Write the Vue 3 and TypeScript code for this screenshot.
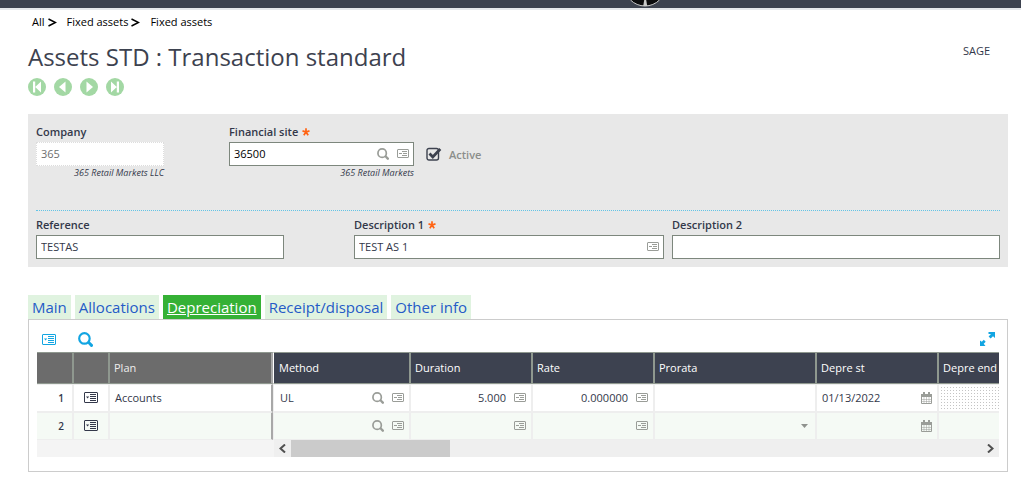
<script setup lang="ts">
import { ref } from 'vue'

interface Line {
  id: number
  plan: string
  method: string
  duration: string
  rate: string
  prorata: string
  start: string
  endLocked: boolean
}

const tabs = ['Main', 'Allocations', 'Depreciation', 'Receipt/disposal', 'Other info']
const activeTab = ref('Depreciation')

const company = ref('365')
const site = ref('36500')
const active = ref(true)
const reference = ref('TESTAS')
const description1 = ref('TEST AS 1')
const description2 = ref('')

const navButtons = [
  { label: 'First record', path: 'M5 3.500h2.200v11H5zM13 3.500v11L7.200 9z' },
  { label: 'Previous record', path: 'M11.500 3.500v11L5 9z' },
  { label: 'Next record', path: 'M6.500 3.500v11L13 9z' },
  { label: 'Last record', path: 'M10.800 3.500H13v11h-2.200zM5 3.500v11L10.800 9z' },
]

const lines = ref<Line[]>([
  { id: 1, plan: 'Accounts', method: 'UL', duration: '5.000', rate: '0.000000', prorata: '', start: '01/13/2022', endLocked: true },
  { id: 2, plan: '', method: '', duration: '', rate: '', prorata: '', start: '', endLocked: false },
])
</script>

<template>
  <svg class="symbols" aria-hidden="true">
    <symbol id="i-search" viewBox="0 0 14 14">
      <circle cx="6" cy="6" r="4.900" fill="none" stroke="currentColor" stroke-width="2" />
      <path d="M8.500 10l1.700-1.800 3.400 3.300a1.300 1.300 0 0 1-2 2z" fill="currentColor" />
    </symbol>
    <symbol id="i-card" viewBox="0 0 14 11">
      <rect x="0.500" y="0.500" width="13" height="10" rx="0.500" fill="none" stroke="currentColor" />
      <path d="M2 4.500h3.200L3.600 6.500zM6 2h6v1H6zM6 4h6v1H6zM6 6h6v1H6zM6 8h6v1H6z" fill="currentColor" />
    </symbol>
    <symbol id="i-card-small" viewBox="0 0 12 9">
      <rect x="0.500" y="0.500" width="11" height="8" rx="0.500" fill="none" stroke="currentColor" />
      <path d="M2 4h3v1H2zM5 2h5v1H5zM6 4h4v1H6zM5 6h5v1H5z" fill="currentColor" />
    </symbol>
    <symbol id="i-calendar" viewBox="0 0 11 12">
      <path d="M0 2h11v3H0zM2 0h2v2H2zM7 0h2v2H7z" fill="currentColor" />
      <path d="M.5 5v6.500h10V5" fill="none" stroke="currentColor" />
      <path d="M3 5v6M5.500 5v6M8 5v6M1 7.500h9M1 9.500h9" fill="none" stroke="currentColor" stroke-width="0.500" />
    </symbol>
    <symbol id="i-star" viewBox="0 0 8 8">
      <path d="M4 4V.3M4 4L.5 2.900M4 4l3.500-1.100M4 4L1.800 7.200M4 4l2.200 3.200" fill="none" stroke="#ff6414" stroke-width="1.700" />
    </symbol>
  </svg>

  <header class="topbar">
    <svg class="avatar" width="30" height="7" viewBox="0 0 30 7" aria-hidden="true">
      <circle cx="15" cy="-14.500" r="20.500" fill="#0b0b0d" stroke="#c8c8c8" />
      <path d="M14.200 0h2l1 6h-4z" fill="#c9c9c9" />
    </svg>
  </header>

  <main class="page">
    <nav class="crumbs" aria-label="Breadcrumb">
      <template v-for="(crumb, i) in ['All', 'Fixed assets', 'Fixed assets']" :key="i">
        <a href="#">{{ crumb }}</a>
        <svg v-if="i < 2" width="9" height="9" viewBox="0 0 9 9" aria-hidden="true">
          <path d="M.5 1l7 3.500-7 3.500" fill="none" stroke="#000" stroke-width="1.500" />
        </svg>
      </template>
    </nav>

    <div class="heading">
      <h1>Assets STD : Transaction standard</h1>
      <span class="folder">SAGE</span>
    </div>

    <div class="recordnav">
      <button v-for="b in navButtons" :key="b.label" type="button" :aria-label="b.label">
        <svg width="18" height="18" viewBox="0 0 18 18">
          <circle cx="9" cy="9" r="9" fill="#a3d8a4" />
          <path :d="b.path" fill="#fff" />
        </svg>
      </button>
    </div>

    <section class="panel">
      <div class="row first">
        <div class="field company">
          <label for="company">Company</label>
          <div class="box readonly"><input id="company" v-model="company" readonly /></div>
          <em>365 Retail Markets LLC</em>
        </div>
        <div class="field site">
          <label for="site">Financial site <svg class="star"><use href="#i-star" /></svg></label>
          <div class="box strong">
            <input id="site" v-model="site" />
            <button type="button" aria-label="Search site"><svg class="search"><use href="#i-search" /></svg></button>
            <button type="button" aria-label="Site actions"><svg class="card"><use href="#i-card-small" /></svg></button>
          </div>
          <em>365 Retail Markets</em>
        </div>
        <label class="check">
          <input v-model="active" type="checkbox" />
          <svg width="16" height="14" viewBox="0 0 16 14" aria-hidden="true">
            <rect x="1" y="1.500" width="11.500" height="11.500" rx="2" fill="none" stroke="#3d424f" stroke-width="1.400" />
            <path v-if="active" d="M3.500 6.500l3.300 3.500 7.500-8" fill="none" stroke="#3d424f" stroke-width="2.800" />
          </svg>
          <span>Active</span>
        </label>
      </div>
      <div class="row second">
        <div class="field reference">
          <label for="reference">Reference</label>
          <div class="box"><input id="reference" v-model="reference" /></div>
        </div>
        <div class="field desc1">
          <label for="desc1">Description 1 <svg class="star"><use href="#i-star" /></svg></label>
          <div class="box">
            <input id="desc1" v-model="description1" />
            <button type="button" aria-label="Description actions"><svg class="card"><use href="#i-card-small" /></svg></button>
          </div>
        </div>
        <div class="field desc2">
          <label for="desc2">Description 2</label>
          <div class="box"><input id="desc2" v-model="description2" /></div>
        </div>
      </div>
    </section>

    <div class="tabs" role="tablist">
      <button
        v-for="t in tabs"
        :key="t"
        type="button"
        role="tab"
        :aria-selected="t === activeTab"
        :class="{ on: t === activeTab }"
        @click="activeTab = t"
      >{{ t }}</button>
    </div>

    <section class="content">
      <div class="tools">
        <button type="button" aria-label="Table actions"><svg width="14" height="11"><use href="#i-card" /></svg></button>
        <button type="button" aria-label="Search"><svg width="15" height="15"><use href="#i-search" /></svg></button>
        <button class="expand" type="button" aria-label="Full screen">
          <svg width="16" height="14" viewBox="0 0 16 14">
            <path d="M9.500 0H16v6l-2-1.800-2.400 2.300-2-2L12 2H9.500zM6.500 14H1V8.500l1.800 1.300 2-2 1.900 2-2 2L6.500 14z" fill="#12a5e2" />
          </svg>
        </button>
      </div>

      <table>
        <colgroup>
          <col class="w-num" /><col class="w-act" /><col class="w-plan" /><col class="w-method" />
          <col class="w-mid" /><col class="w-mid" /><col class="w-prorata" /><col class="w-mid" /><col />
        </colgroup>
        <thead>
          <tr>
            <th class="fixed"></th>
            <th class="fixed"></th>
            <th class="fixed plan">Plan</th>
            <th class="method">Method</th>
            <th>Duration</th>
            <th>Rate</th>
            <th>Prorata</th>
            <th>Depre st</th>
            <th class="last">Depre end</th>
          </tr>
        </thead>
        <tbody>
          <tr v-for="line in lines" :key="line.id">
            <td class="num">{{ line.id }}</td>
            <td class="act"><button type="button" aria-label="Line actions"><svg width="14" height="11"><use href="#i-card" /></svg></button></td>
            <td class="plan">{{ line.plan }}</td>
            <td class="method">
              <div class="cell">
                <input v-model="line.method" aria-label="Method" />
                <button type="button" aria-label="Search method"><svg class="search"><use href="#i-search" /></svg></button>
                <button type="button" aria-label="Method actions"><svg class="card"><use href="#i-card-small" /></svg></button>
              </div>
            </td>
            <td>
              <div class="cell amount">
                <input v-model="line.duration" aria-label="Duration" />
                <button type="button" aria-label="Duration actions"><svg class="card"><use href="#i-card-small" /></svg></button>
              </div>
            </td>
            <td>
              <div class="cell amount">
                <input v-model="line.rate" aria-label="Rate" />
                <button type="button" aria-label="Rate actions"><svg class="card"><use href="#i-card-small" /></svg></button>
              </div>
            </td>
            <td>
              <div class="cell">
                <select v-model="line.prorata" aria-label="Prorata"><option value=""></option></select>
                <svg v-if="line.id === 2" class="arrow" width="7" height="4" viewBox="0 0 7 4"><path d="M0 0h7L3.500 4z" fill="currentColor" /></svg>
              </div>
            </td>
            <td>
              <div class="cell">
                <input v-model="line.start" aria-label="Depreciation start" />
                <button type="button" aria-label="Open calendar"><svg width="11" height="12"><use href="#i-calendar" /></svg></button>
              </div>
            </td>
            <td class="last" :class="{ locked: line.endLocked }"></td>
          </tr>
        </tbody>
      </table>

      <div class="scroll">
        <div class="still"></div>
        <button type="button" aria-label="Scroll left">
          <svg width="7" height="9" viewBox="0 0 7 9"><path d="M6 .5l-4.500 4 4.500 4" fill="none" stroke="#505050" stroke-width="2" /></svg>
        </button>
        <div class="track"><div class="thumb"></div></div>
        <button type="button" aria-label="Scroll right">
          <svg width="7" height="9" viewBox="0 0 7 9"><path d="M1 .5l4.500 4-4.500 4" fill="none" stroke="#505050" stroke-width="2" /></svg>
        </button>
      </div>
    </section>
  </main>
</template>

<style>
body {
  background: #fff;
  font-family: "Open Sans", "Noto Sans", sans-serif;
  font-size: 11px;
  color: #33384a;
}
</style>

<style scoped>
* { box-sizing: border-box; }
button, input, select {
  font: inherit;
  color: inherit;
  background: none;
  border: 0;
  padding: 0;
  margin: 0;
  min-width: 0;
}
input:focus, select:focus { outline: none; }
button { cursor: pointer; }
svg { display: block; flex: none; }
.symbols { position: absolute; width: 0; height: 0; }

.topbar {
  height: 10px;
  background: #3d424f;
  border-bottom: 2px solid #e6e8eb;
}
.avatar { margin-left: calc(63% - 13px); }

.page { padding: 0 13px 0 28px; }

.crumbs {
  display: flex;
  align-items: center;
  height: 22px;
  padding-left: 4px;
}
.crumbs a { color: #000; text-decoration: none; }
.crumbs svg { margin: 2px 10px 0 3px; }

.heading {
  display: flex;
  justify-content: space-between;
  align-items: flex-start;
  padding-right: 18px;
  height: 46px;
}
h1 {
  margin: 0;
  font-size: 24px;
  font-weight: 400;
  line-height: 50px;
  color: #3d424f;
}
.folder { line-height: 38px; }

.recordnav { display: flex; gap: 8px; height: 18px; }

.panel {
  margin-top: 18px;
  padding: 8px;
  background: #e8e8e8;
}
.row { display: flex; }
.first { height: 89px; border-bottom: 1px dotted #62c4e6; }
.second { padding-top: 4px; }
.field { display: flex; flex-direction: column; }
.field label {
  display: flex;
  align-items: center;
  gap: 4px;
  height: 20px;
  padding-bottom: 2px;
  font-weight: 600;
}
.star { width: 8px; height: 8px; margin-top: 2px; }
.box {
  display: flex;
  align-items: center;
  gap: 8px;
  height: 24px;
  padding: 0 4px 1px;
  background: #fff;
  border: 1px solid #7d877d;
}
.box input { flex: 1; width: 100%; }
.readonly { border: 1px dotted #ddd; color: #6e6e6e; }
.strong { color: #000; }
.search { width: 12px; height: 12px; }
.card { width: 12px; height: 9px; }
.box button, .cell button { color: #9a9d98; }
.field em { align-self: flex-end; font-size: 9px; line-height: 14px; }
.company { width: 128px; margin-right: 65px; }
.site { width: 185px; }
.check {
  display: flex;
  align-items: center;
  gap: 7px;
  height: 24px;
  margin: 20px 0 0 12px;
  font-weight: 600;
  color: #8b8e8b;
}
.check input { position: absolute; opacity: 0; }
.reference { width: 248px; margin-right: 70px; }
.desc1 { width: 310px; margin-right: 8px; }
.desc2 { flex: 1; }

.tabs { display: flex; gap: 4px; margin-top: 28px; }
.tabs button {
  height: 24px;
  padding: 0 4px;
  background: #e0f3e0;
  color: #255bc7;
  font-size: 15px;
}
.tabs .on { background: #35b135; color: #fff; text-decoration: underline; }

.content { border: 1px solid #ccc; padding: 0 8px 14px; }
.tools {
  display: flex;
  align-items: center;
  gap: 22px;
  height: 32px;
  padding: 6px 4px 0 5px;
  color: #12a5e2;
}
.tools .expand { margin-left: auto; }

table {
  width: 100%;
  table-layout: fixed;
  border-collapse: separate;
  border-spacing: 0;
}
.w-num { width: 37px; }
.w-act { width: 36px; }
.w-plan { width: 163px; }
.w-method { width: 138px; }
.w-mid { width: 122px; }
.w-prorata { width: 162px; }
th {
  height: 32px;
  padding: 0 4px 1px;
  text-align: left;
  font-weight: 400;
  color: #fff;
  background: #3d4250;
  border: solid #8f988f;
  border-width: 1px 2px 1px 0;
  white-space: nowrap;
  overflow: hidden;
}
th.fixed { background: #6c6c6c; color: #eee; }
th.plan, td.plan { border-right-color: #a8a8a8; }
th.method { padding-left: 5px; border-left: 1px solid #fff; }
td.method { border-left: 1px solid #eee; padding-left: 6px; }
th.last, td.last { border-right-width: 0; }
td {
  height: 28px;
  padding: 0 5px 1px;
  background: #fff;
  border: solid #eee;
  border-width: 1px 2px 1px 0;
}
tbody tr:nth-child(2) td { background: #f5faf5; }
.num { text-align: right; padding-right: 8px; font-size: 10px; font-weight: 600; }
.act button { display: block; margin: 0 auto; }
td.locked {
  background-image:
    linear-gradient(#fff 2px, transparent 2px),
    linear-gradient(90deg, #fff 2px, #c4c4c4 2px);
  background-size: 3px 3px;
}
.cell { display: flex; align-items: center; gap: 8px; height: 24px; }
.cell input, .cell select { flex: 1; width: 100%; appearance: none; }
.amount input { text-align: right; }
.arrow { color: #8f928e; margin-right: 2px; }

.scroll { display: flex; height: 17px; background: #efefef; }
.still { width: 237px; background: #f4f4f4; }
.scroll button {
  width: 17px;
  display: flex;
  align-items: center;
  justify-content: center;
}
.track { flex: 1; }
.thumb { width: 23%; height: 100%; background: #cbcbcb; }
</style>
